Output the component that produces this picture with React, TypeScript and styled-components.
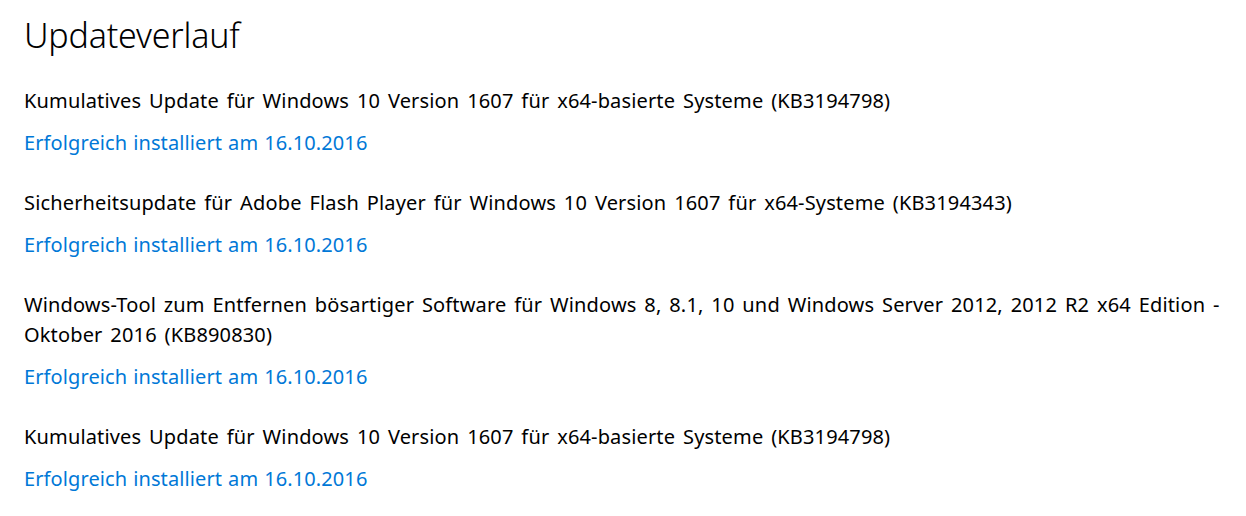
import React from 'react'
import styled, { createGlobalStyle } from 'styled-components'

const GlobalStyle = createGlobalStyle`
  html, body {
    margin: 0;
    background: #ffffff;
  }
  body {
    font-family: "Noto Sans", "Open Sans", sans-serif;
    color: #000000;
  }
`

const Page = styled.main`
  padding: 13px 24px 0 24px;
  box-sizing: border-box;
`

const Heading = styled.h1`
  margin: 0;
  font-size: 34px;
  font-weight: 300;
  line-height: 44px;
  letter-spacing: -0.2px;
`

const UpdateList = styled.ul`
  list-style: none;
  margin: 29px 0 0 0;
  padding: 0;
  display: flex;
  flex-direction: column;
  gap: 30px;
`

const UpdateItem = styled.li`
  display: flex;
  flex-direction: column;
  gap: 12px;
`

const UpdateName = styled.div`
  font-size: 20px;
  line-height: 30px;
  letter-spacing: 0.15px;
  word-spacing: 2.5px;
`

const StatusLink = styled.a`
  align-self: flex-start;
  font-size: 20px;
  line-height: 30px;
  letter-spacing: 0.1px;
  word-spacing: 0.7px;
  color: #0078d7;
  text-decoration: none;
  cursor: pointer;
`

interface Update {
  name: string
  status: string
}

const updates: Update[] = [
  {
    name: 'Kumulatives Update für Windows 10 Version 1607 für x64-basierte Systeme (KB3194798)',
    status: 'Erfolgreich installiert am 16.10.2016',
  },
  {
    name: 'Sicherheitsupdate für Adobe Flash Player für Windows 10 Version 1607 für x64-Systeme (KB3194343)',
    status: 'Erfolgreich installiert am 16.10.2016',
  },
  {
    name: 'Windows-Tool zum Entfernen bösartiger Software für Windows 8, 8.1, 10 und Windows Server 2012, 2012 R2 x64 Edition - Oktober 2016 (KB890830)',
    status: 'Erfolgreich installiert am 16.10.2016',
  },
  {
    name: 'Kumulatives Update für Windows 10 Version 1607 für x64-basierte Systeme (KB3194798)',
    status: 'Erfolgreich installiert am 16.10.2016',
  },
]

export default function App() {
  return (
    <>
      <GlobalStyle />
      <Page>
        <Heading>Updateverlauf</Heading>
        <UpdateList>
          {updates.map((u, i) => (
            <UpdateItem key={i}>
              <UpdateName>{u.name}</UpdateName>
              <StatusLink>{u.status}</StatusLink>
            </UpdateItem>
          ))}
        </UpdateList>
      </Page>
    </>
  )
}
